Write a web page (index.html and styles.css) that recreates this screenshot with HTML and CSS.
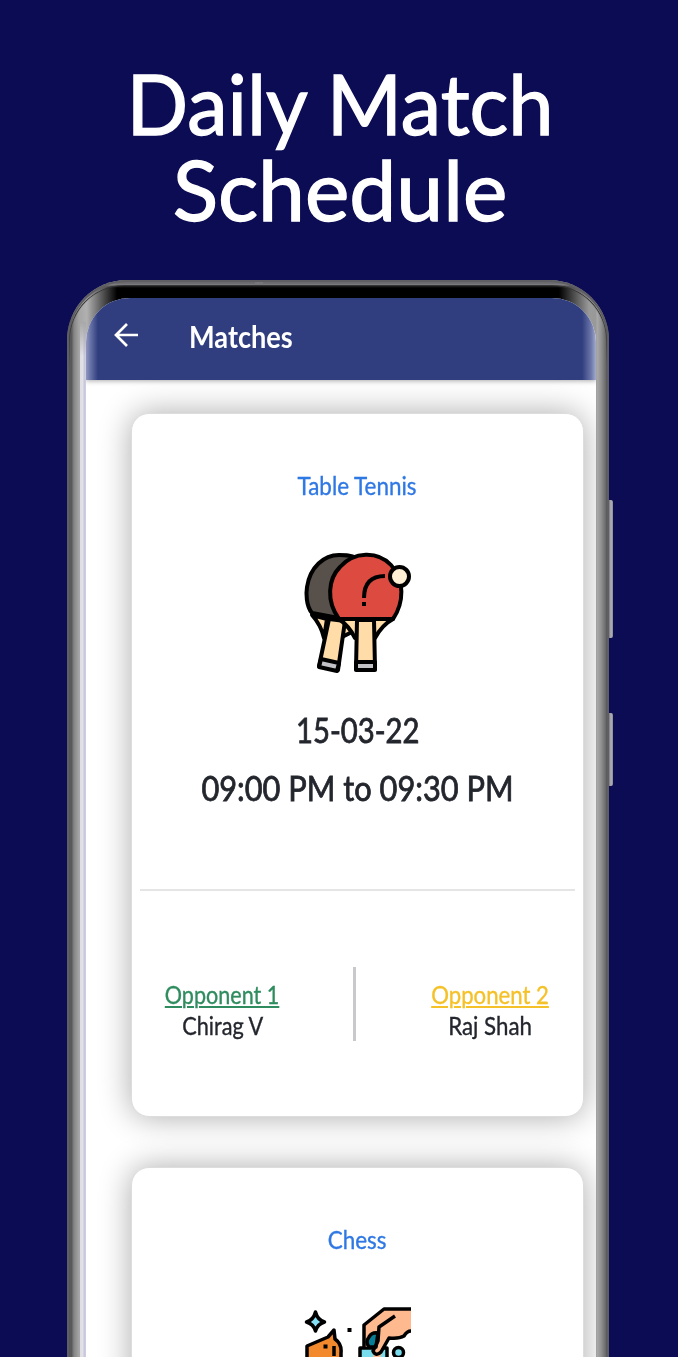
FILE: index.html
```html
<!DOCTYPE html>
<html lang="en">
<head>
<meta charset="utf-8">
<meta name="viewport" content="width=device-width">
<title>Daily Match Schedule</title>
<link rel="stylesheet" href="styles.css">
</head>
<body>
<main class="promo">
  <h1 class="headline"><span class="line line-a">Daily Match</span><span class="line line-b">Schedule</span></h1>
  <section class="phone">
    <i class="key key-volume"></i><i class="key key-power"></i>
    <div class="bezel-top"></div>
    <div class="screen">
      <header class="appbar">
        <svg class="back" viewBox="0 0 26 26"><path d="M25 13H4M14 2 3 13l11 11" fill="none" stroke="#fff" stroke-width="2.700"/></svg>
        <h2 class="title">Matches</h2>
      </header>
      <div class="feed">
        <article class="card">
          <h3 class="sport">Table Tennis</h3>
          <svg class="art" viewBox="0 0 135 140" stroke="#000" stroke-width="4" stroke-linejoin="round">
            <path d="M24 75q9 6 11 23M62 86l-9 8" fill="#ffdca8"/>
            <path d="M22 75 37 79 34 98Q31 85 22 75ZM53 81l12 0 1 9-14 7Z" fill="#ffdca8"/>
            <path d="M22 73C16 66 16 53 17 47 20 27 34 15 49 15c7 0 12 0 17 3L54 79Z" fill="#57504b"/>
            <path d="M39 79 29 126l19 4 7-49Z" fill="#ffdca8"/>
            <path d="m31 119-2 8 18 4 2-8Z" fill="#c2c1c5"/>
            <path d="M49 79q10 7 16 19h20Q92 85 103 79Z" fill="#ffdca8"/>
            <path d="M49 79C36 61 38 39 50 27c14-16 38-16 51-2 14 15 13 38 2 54Z" fill="#dc4a40"/>
            <path d="M67 80h17l1 49H66Z" fill="#ffdca8"/><path d="M66 122h19v8H66Z" fill="#c2c1c5"/>
            <path d="M74 58Q74 36 95 36M74 61v5" fill="none"/>
            <path d="M71.500 58h5v4h-5Z" fill="#dc4a40" stroke="none"/>
            <circle cx="109.500" cy="36.500" r="9.500" fill="#fff0d5"/>
          </svg>
          <p class="date">15-03-22</p>
          <p class="time">09:00 PM to 09:30 PM</p>
          <div class="versus">
            <div class="player"><a class="role role-one">Opponent 1</a><span class="name name-one">Chirag V</span></div>
            <i class="divider"></i>
            <div class="player"><a class="role role-two">Opponent 2</a><span class="name name-two">Raj Shah</span></div>
          </div>
        </article>
        <article class="card">
          <h3 class="sport sport-chess">Chess</h3>
          <svg class="art art-chess" viewBox="0 0 135 140" stroke="#000" stroke-width="3.500" stroke-linejoin="round">
            <path d="M25.500 22q2 8 9 10-7 2-9 9-2-7-9-9 7-2 9-10Z" fill="#85dff5"/>
            <path d="M57.500 38h4v4h-4Z" fill="#000" stroke="none"/>
            <path d="M17 80V56l21-9 6-7 1 9q7 5 6 14v17Z" fill="#f28a2d"/>
            <path d="M44 56v10" fill="none"/><path d="M33.500 54.500h4v4h-4Z" fill="#000" stroke="none"/>
            <path d="M70 80V58h27v22" fill="#78dced"/>
            <path d="M74 57V36l20-17h27v22l-13 8-10 1-10 22q-5 4-6-1l4-16Z" fill="#ffb98f" stroke="none"/>
            <path d="M88 43q-6-1-9 4-4 5 0 10h7Z" fill="#087d96"/>
            <path d="M74 57V35l20-16h27M121 41q-4 0-7 5-5 3-15 2L91 62q-5 5-8-1l5-10 1-14 16-11" fill="none"/>
            <circle cx="108.500" cy="62.500" r="5" fill="#78dced"/>
          </svg>
        </article>
      </div>
    </div>
  </section>
</main>
</body>
</html>
```
FILE: styles.css
```css
* { box-sizing: border-box; }
body { margin: 0; background: #0c0c54; font-family: Lato, "Open Sans", sans-serif; }
h1, h2, h3, p { margin: 0; font-weight: 400; }
.promo { height: 1357px; overflow: hidden; padding-top: 60px; }
.headline { height: 220px; padding-left: 2px; display: flex; flex-direction: column; align-items: center; color: #fff; font-size: 84px; line-height: 86px; -webkit-text-stroke: 1.3px #fff; }
.line { display: block; white-space: nowrap; }
.line-a { transform: scaleX(.966); }
.phone { position: relative; width: 542px; height: 1140px; margin-left: 67px; padding: 18px 13px 0 19px; border-radius: 60px 60px 0 0;
  background: linear-gradient(#a8a8a8, #a8a8a800) 13px 42px / 6px 34px no-repeat,
    linear-gradient(90deg, #dddde2 0, #e2e2e7 3px, #c4c4dc 4px, #d0d0e3 6px) 13px 42px / 6px 100% no-repeat,
    linear-gradient(90deg, #77777d 0, #45454a 2px, #505050 4px, #858585 7px, #a5a5a5 12px, #b0b0b0 19px, #999 529px, #aaa 530px, #929292 534px, #707070 538px, #484848 540px, #77777b 542px); }
.bezel-top { position: absolute; inset: 0 0 auto; height: 62px; border-radius: 60px 60px 0 0;
  background: radial-gradient(circle, #77777c, #77777c) 188px 0 / 8px 5px no-repeat, linear-gradient(#5b5b60 0, #6c6b70 4px, #88888b 5px, #222 6px, #000 8px);
  -webkit-mask-image: linear-gradient(90deg, transparent 20px, #000 50px, #000 492px, transparent 522px);
  mask-image: linear-gradient(90deg, transparent 20px, #000 50px, #000 492px, transparent 522px); }
.phone::before { content: ""; position: absolute; z-index: 1; inset: 5px 2px 0; height: 80px; border: 1px solid #333; border-bottom: 0; border-radius: 55px 55px 0 0; pointer-events: none;
  -webkit-mask-image: linear-gradient(#000 30px, transparent); mask-image: linear-gradient(#000 30px, transparent); }
.phone::after { content: ""; position: absolute; inset: 0; border: 2px solid #5e5e63; border-bottom: 0; border-radius: 60px 60px 0 0; box-shadow: inset 0 0 0 2px #74747a55; pointer-events: none; }
.key { position: absolute; left: 542px; width: 4px; background: linear-gradient(90deg, #77777b, #b4b4bc 50%, #88888f); border-radius: 0 2px 2px 0; }
.key-volume { top: 220px; height: 138px; }
.key-power { top: 433px; height: 73px; }
.screen { position: relative; height: 1122px; overflow: hidden; background: #fff; border-radius: 44px 44px 0 0; }
.appbar { position: relative; z-index: 1; height: 81.500px; display: flex; align-items: center; padding: 0 0 7px 27px; color: #fff; background: linear-gradient(90deg, #9298bf 0, #6b76a9 4px, #303d7e 12px, #303d7e 496px, #6b76a9 505px, #a4abcd 510px); box-shadow: 0 1px 5px #0005; }
.back { width: 26px; height: 26px; }
.title { margin-left: 50px; padding-top: 2px; font-size: 30px; font-weight: 700; line-height: 36px; transform-origin: left; transform: scaleX(.905); }
.feed { padding: 33px 12px 0 45px; display: grid; gap: 50px; }
.card { height: 704px; border: 1px solid #ddd; border-radius: 18px; background: #fff; box-shadow: 0 0 32px #0005; display: flex; flex-direction: column; align-items: center; padding: 54px 8px 0; color: #23262d; white-space: nowrap; -webkit-text-stroke: .35px; }
.sport { font-size: 24.500px; line-height: 36px; color: #2f78e4; transform: scaleX(.915); }
.art { width: 135px; height: 140px; margin-top: 36px; flex: none; }
.art-chess { margin-top: 32px; }
.date { margin-top: 28px; font-size: 34px; line-height: 44px; transform: scaleX(.86); -webkit-text-stroke-width: .8px; }
.time { margin-top: 14px; font-size: 34px; line-height: 44px; transform: scaleX(.905); -webkit-text-stroke-width: .8px; }
.versus { margin-top: 79px; width: 100%; height: 226px; border-top: 2px solid #e5e5e5; display: grid; grid-template-columns: 165px 102px 167px; padding-top: 76px; }
.player { display: flex; flex-direction: column; align-items: center; padding-top: 12px; font-size: 24.500px; line-height: 31px; }
.role { text-decoration: underline; text-decoration-thickness: 2px; text-underline-offset: 2px; transform: scaleX(.88); }
.role-one { color: #2f8c5e; }
.role-two { color: #f5c129; transform: scaleX(.905); }
.name { transform: scaleX(.885); }
.name-two { transform: scaleX(.91); }
.divider { width: 3px; height: 74px; margin-left: 48px; background: #c9c9cb; }
```
